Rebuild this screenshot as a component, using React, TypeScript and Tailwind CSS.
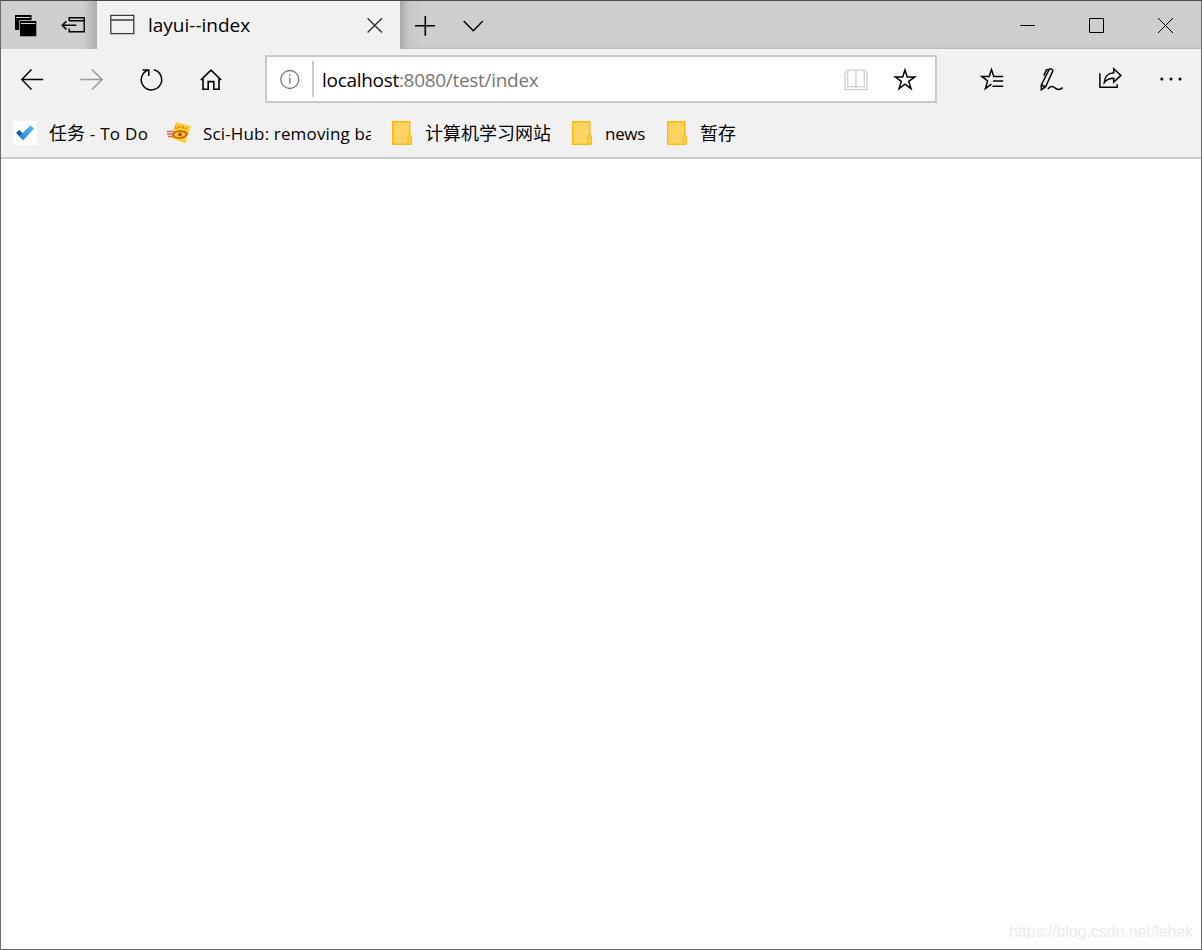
import type { ReactNode } from "react";

const Icon = ({ children, size = 26 }: { children: ReactNode; size?: number }) => (
  <svg
    width={size}
    height={size}
    viewBox={`0 0 ${size} ${size}`}
    fill="none"
    stroke="currentColor"
    strokeWidth="1.5"
    className="shrink-0"
  >
    {children}
  </svg>
);

const ToolButton = ({ children, disabled }: { children: ReactNode; disabled?: boolean }) => (
  <button
    className={`flex h-[60px] w-[60px] items-center justify-center ${disabled ? "text-[#999999]" : "text-black"}`}
  >
    <Icon>{children}</Icon>
  </button>
);

const FolderIcon = () => (
  <svg width="24" height="24" viewBox="0 0 24 24" className="shrink-0">
    <path d="M3.7.7h17.1v22.6H3.7z" fill="#ffd364" stroke="#ffb900" strokeWidth="1.4" />
    <path
      d="M19.2 23.3v-7.2c0-.8.6-1.4 1.4-1.4h.3c.8 0 1.4.6 1.4 1.4v5.8c0 .8-.6 1.4-1.4 1.4z"
      fill="#ffd364"
      stroke="#ffb900"
      strokeWidth="1.3"
    />
  </svg>
);

const TodoIcon = () => (
  <svg width="24" height="24" viewBox="0 0 24 24" className="shrink-0 bg-white">
    <defs>
      <linearGradient id="check" x1="9" y1="19" x2="21" y2="6" gradientUnits="userSpaceOnUse">
        <stop stopColor="#2387e4" />
        <stop offset="1" stopColor="#5eb8f7" />
      </linearGradient>
    </defs>
    <path d="M3 12l3.2-3.2 6.5 6.5-3.3 3.3z" fill="#1b57b9" />
    <path d="M6.3 15.3L17.6 4.2 21 7.5 10.3 19.2z" fill="url(#check)" />
  </svg>
);

const SciHubIcon = () => (
  <svg width="24" height="24" viewBox="0 0 24 24" fill="none" className="shrink-0">
    <path d="M8.8 1l15 4.2-5.6 17.3L4.8 17z" fill="#ffcf2d" />
    <path d="M0 10.5h7M0 13h6M1 15.5h6" stroke="#df6555" strokeWidth="1.3" />
    <path d="M6 13.7c1.4-2.5 3.7-3.7 7-3.7 3.2 0 5.6 1.1 7 2.8-1.8 3.2-4.6 4.2-7.5 4.2-3.2 0-5.5-1-6.5-3.3z" stroke="#d1500f" strokeWidth="1.5" />
    <circle cx="13" cy="13.4" r="1.9" fill="#c53912" />
    <path d="M9.2 8L8.5 5.7M11.4 7.3l-.3-2.4M13.7 7V4.8M16 7.5l.6-2.3M18.2 8.6l1-2" stroke="#dc7612" strokeWidth="1.2" />
  </svg>
);

const TitleBar = () => (
  <header className="flex h-12 bg-[#cdcdcd] text-black">
    <div className="flex w-24 bg-linear-to-r from-[#cfcfcf] from-85% to-[#adadad]">
      <button className="flex w-12 items-center justify-center">
        <svg width="24" height="24" viewBox="0 0 24 24">
          <path d="M2 2h16.5v5.5H7V17H2z" />
          <path d="M3.3 4.5h14" stroke="#d5d5d5" strokeWidth="1" />
          <path d="M7 8h16.3v15.3H7z" />
          <path d="M8 10.5h14.3" stroke="#d5d5d5" strokeWidth="1" />
          <path d="M6.5 17.5V7.5H18.5" stroke="#cfcfcf" strokeWidth=".7" fill="none" />
        </svg>
      </button>
      <button className="flex w-12 items-center justify-center">
        <Icon>
          <path d="M9.2 9V5.7h15v14.1h-15v-3.3M9.2 8.8h15" strokeWidth="1.4" />
          <path d="M16.3 13.3H2.5M6.4 9.2l-4.1 4.1 4.1 4.1" />
        </Icon>
      </button>
    </div>

    {/* Active tab */}
    <div className="flex w-[303px] items-center bg-[#f1f1f1] pr-4 pl-[13px]">
      <svg width="26" height="22" viewBox="0 0 26 22" fill="none" stroke="#3c3c3c" className="mb-[2px]">
        <path d="M.8 2.3h23v18.4H.8zM.8 7h23" strokeWidth="1.3" />
      </svg>
      <span className="ml-3 flex-1 text-[19px] leading-6 text-black">layui--index</span>
      <svg width="18" height="18" viewBox="0 0 18 18" stroke="#333333" strokeWidth="1.4">
        <path d="M1.6 2.3l14.3 14.3M15.9 2.3L1.6 16.6" />
      </svg>
    </div>

    <div className="flex flex-1 bg-linear-to-r from-[#a7a7a7] via-[#c8c8c8] via-[9px] to-[#cecece] to-[25px] shadow-[inset_0_-2px_2px_-1px_#b5b5b5]">
      <button className="flex w-[49px] items-center justify-center">
        <Icon>
          <path d="M3 13.7h20M13.3 4v20" strokeWidth="1.6" />
        </Icon>
      </button>
      <button className="flex w-12 items-center justify-center">
        <Icon>
          <path d="M3.7 9l9.6 9.7L22.9 9" strokeWidth="1.5" />
        </Icon>
      </button>
      <div className="mr-px ml-auto flex">
        <button className="flex w-[69px] items-center justify-center">
          <svg width="15" height="15" stroke="black">
            <path d="M0 7.5h15" />
          </svg>
        </button>
        <button className="flex w-[69px] items-center justify-center">
          <svg width="15" height="15" stroke="black" fill="none">
            <path d="M.5.5h14v14H.5z" />
          </svg>
        </button>
        <button className="flex w-[69px] items-center justify-center">
          <svg width="15" height="15" stroke="black">
            <path d="M0 0l15 15M15 0L0 15" />
          </svg>
        </button>
      </div>
    </div>
  </header>
);

const AddressBar = () => (
  <div className="ml-6 flex h-12 w-[672px] items-center border-2 border-[#c9c9c9] bg-white">
    <svg width="45" height="36" viewBox="0 0 45 36" fill="none" stroke="#777777" className="shrink-0">
      <circle cx="22.8" cy="18.5" r="9" strokeWidth="1.3" />
      <path d="M22.8 16.5v6.2M22.8 13.3v1.6" strokeWidth="1.3" />
    </svg>
    <div className="h-9 w-0.5 bg-[#c9c9c9]" />
    <div className="ml-2 flex-1 pt-0.5 text-[19px] leading-6 tracking-[-0.3px] text-[#767676]">
      <span className="text-black">localhost</span>:8080/test/index
    </div>
    <div className="flex w-[49px] justify-center text-[#cfcfcf]">
      <Icon>
        <path d="M4.7 4.2h6.5c.9 0 1.6.5 1.8 1.2.2-.7.9-1.2 1.8-1.2h6.5v16.5h-6.5c-.9 0-1.6.6-1.8 1.3-.2-.7-.9-1.3-1.8-1.3H4.7zM13 5.5V22" strokeWidth="1.3" />
        <path d="M4.7 6.2H2v17.5h22V6.2h-2.7" strokeWidth="1.3" />
      </Icon>
    </div>
    <div className="mr-1.5 flex w-[49px] justify-center text-black">
      <Icon>
        <path d="M13 4l2.3 7h7.4l-6 4.4 2.3 7.3-6-4.5-6 4.5 2.3-7.3-6-4.4h7.4z" strokeWidth="1.5" />
      </Icon>
    </div>
  </div>
);

const Toolbar = () => (
  <div className="flex h-[60px] items-center">
    {/* Back */}
    <ToolButton>
      <path d="M13.5 3.5L3.8 13.5l9.7 10M3.8 13.5h21.4" />
    </ToolButton>
    {/* Forward */}
    <ToolButton disabled>
      <path d="M14 3.5l10 10-10 10M24 13.5H2.3" />
    </ToolButton>
    {/* Refresh */}
    <ToolButton>
      <path d="M16 3.8a10.2 10.2 0 1 1-6.3.4" />
      <path d="M4.6 4h6.2v6" />
    </ToolButton>
    {/* Home */}
    <ToolButton>
      <path d="M2.8 14L13 4.1 23.2 14M5 12.2v11.1h5.2v-7.7h5.6v7.7H21V12.2" strokeWidth="1.6" />
    </ToolButton>
    <AddressBar />
    <div className="ml-auto flex">
      {/* Favorites hub */}
      <ToolButton>
        <path d="M25.2 10.4h-9.4L13.5 3.6l-2.3 6.8H3.8l5.8 4.6-2.2 7.6 6-4.4M15 15h10.2M14.5 20.3h10.7" strokeWidth="1.5" />
      </ToolButton>
      {/* Notes */}
      <ToolButton>
        <path d="M3.3 19L11.2 3.4c.7-1.1 3.8-.2 3.7 1.4L7.6 20.7l-4.3 3zM11.2 3.4l-2.7.2-2.7 6M3.4 19l4.2 1.7" strokeWidth="1.5" />
        <path d="M9.8 22.9c2.8-3.2 5-2.9 7.1-1 2.4 2.2 4.7 2.4 7.8-.3" strokeWidth="1.5" />
      </ToolButton>
      {/* Share */}
      <ToolButton>
        <path d="M1.9 7.2v14h17.2v-3" strokeWidth="1.5" />
        <path d="M15.7 2.7l7.2 6.7-7.2 6.7v-3.9c-4 0-7.3 1.4-9.4 4.3.2-5.8 4-9.3 9.4-9.7z" strokeWidth="1.5" />
      </ToolButton>
      {/* More */}
      <ToolButton>
        <g fill="currentColor" stroke="none">
          <circle cx="3.8" cy="13" r="1.5" />
          <circle cx="13" cy="13" r="1.5" />
          <circle cx="22" cy="13" r="1.5" />
        </g>
      </ToolButton>
    </div>
  </div>
);

const BookmarksBar = () => (
  <nav className="flex h-12 items-center gap-[18px] pl-3 text-[17px] leading-6 whitespace-nowrap text-black">
    <a className="flex items-center gap-3">
      <TodoIcon />
      <span className="w-[100px] tracking-[0.3px]">
        <span className="text-[18px] tracking-normal">任务</span> - To Do
      </span>
    </a>
    <a className="flex items-center gap-3">
      <SciHubIcon />
      <span className="w-[168px] overflow-hidden pt-0.5 tracking-[0.15px]">Sci-Hub: removing ba</span>
    </a>
    <a className="flex items-center gap-3">
      <FolderIcon />
      <span className="w-[126px] text-[18px]">计算机学习网站</span>
    </a>
    <a className="flex items-center gap-3">
      <FolderIcon />
      <span className="w-[41px] pt-0.5 tracking-[-0.3px]">news</span>
    </a>
    <a className="flex items-center gap-3">
      <FolderIcon />
      <span className="text-[18px]">暂存</span>
    </a>
  </nav>
);

export default function App() {
  return (
    <div className="flex h-[950px] w-[1202px] flex-col overflow-hidden border border-[#6b6b6b] border-t-[#4b4949] bg-white font-['Open_Sans','Noto_Sans_CJK_SC',sans-serif]">
      <TitleBar />
      <div className="h-[110px] border-b-2 border-[#cacaca] bg-[#f1f1f1]">
        <Toolbar />
        <BookmarksBar />
      </div>
      <main className="flex flex-1 items-end justify-end pr-2 pb-[7px]">
        <span className="font-['Liberation_Sans',sans-serif] text-[16px] leading-5 tracking-[-0.07px] text-[#ebebeb]">
          https://blog.csdn.net/lehek
        </span>
      </main>
    </div>
  );
}
